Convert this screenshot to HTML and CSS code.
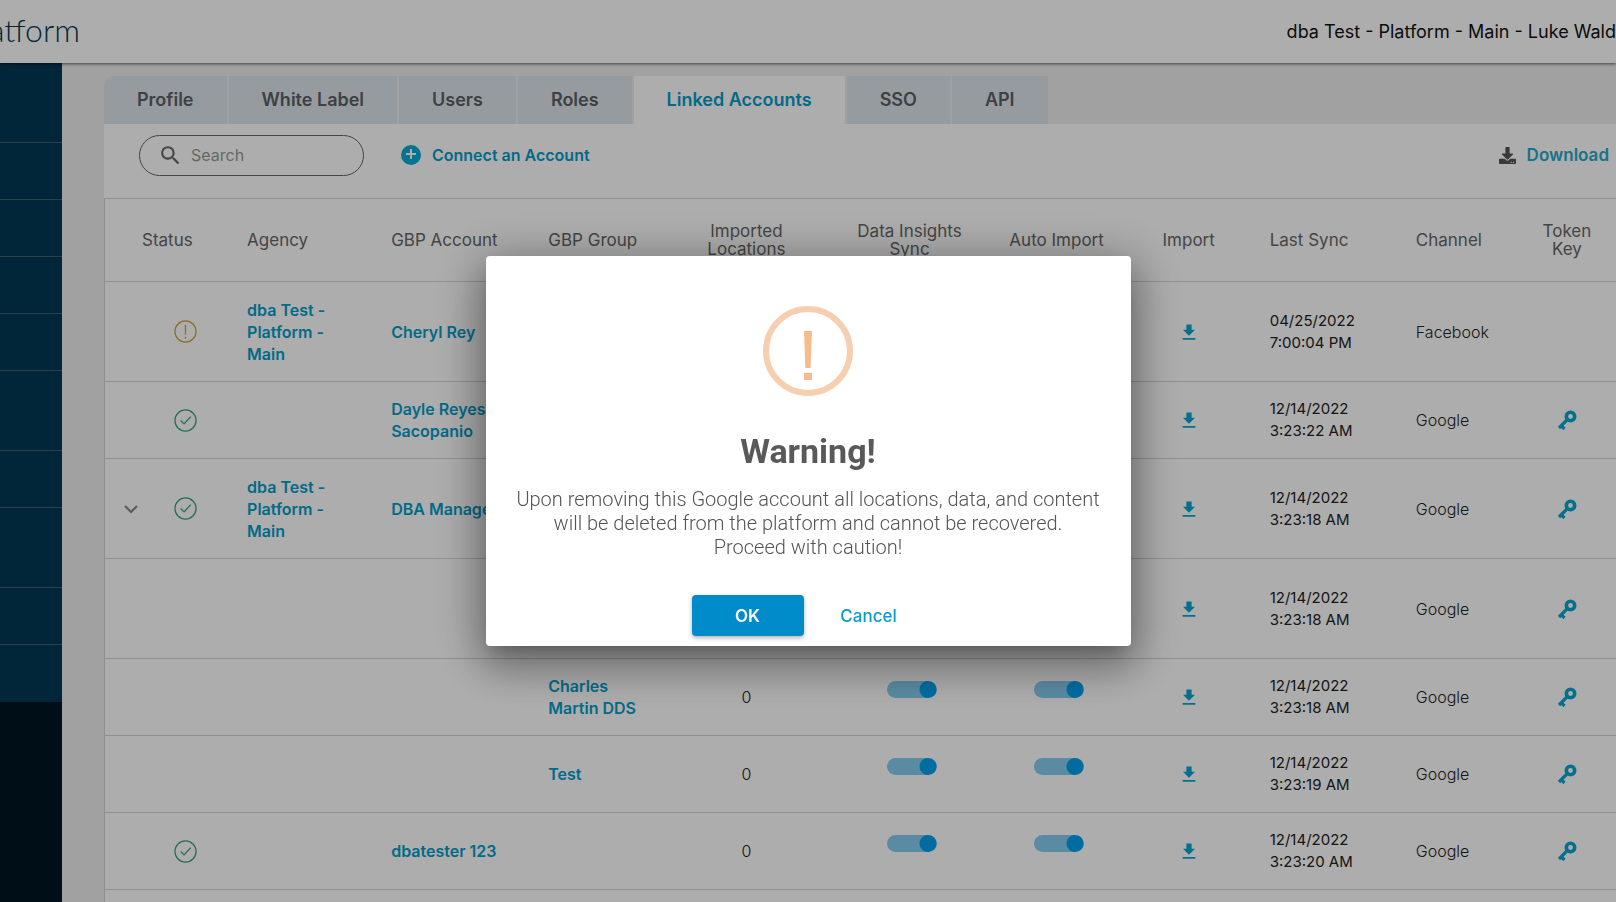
FILE: index.html
```html
<!DOCTYPE html>
<html lang="en">
<head>
    <meta charset="UTF-8">
    <meta name="viewport" content="width=device-width, initial-scale=1.0">
    <title>Platform - Linked Accounts</title>
    <link rel="stylesheet" href="styles.css">
</head>
<body>
    <!-- Shared icons -->
    <svg class="sprite" aria-hidden="true">
        <symbol id="icon-check" viewBox="0 0 24 24">
            <circle cx="12" cy="12" r="11" fill="none" stroke="currentColor" stroke-width="1.3"/>
            <path d="M7 12l3.500 3.500 7-7.500" fill="none" stroke="currentColor" stroke-width="1.4"/>
        </symbol>
        <symbol id="icon-alert" viewBox="0 0 24 24">
            <circle cx="12" cy="12" r="11" fill="none" stroke="currentColor" stroke-width="1.3"/>
            <path d="M12 5v10.500M12 17.500v2" fill="none" stroke="currentColor" stroke-width="1.4"/>
        </symbol>
        <symbol id="icon-import" viewBox="0 0 24 24">
            <path d="M8.500 2h7v7H20l-8 8-8-8h4.500zM3.500 20h17v2.300h-17z" fill="currentColor"/>
        </symbol>
        <symbol id="icon-key" viewBox="0 0 20 20">
            <circle cx="13.500" cy="6.500" r="4.200" fill="none" stroke="currentColor" stroke-width="3.600"/>
            <path d="M10.800 9.200L2 18M4 15.500l3.500 3.500" fill="none" stroke="currentColor" stroke-width="3.200"/>
        </symbol>
    </svg>

    <header class="topbar">
        <div class="logo">Platform</div>
        <div class="user">dba Test - Platform - Main - Luke Wald</div>
    </header>

    <div class="layout">
        <nav class="sidebar" aria-label="Main menu">
            <div class="side-item tall"></div>
            <div class="side-item"></div>
            <div class="side-item"></div>
            <div class="side-item"></div>
            <div class="side-item"></div>
            <div class="side-item tall"></div>
            <div class="side-item"></div>
            <div class="side-item tall"></div>
            <div class="side-item"></div>
            <div class="side-item"></div>
        </nav>

        <main class="content">
            <nav class="tabs">
                <a href="#" class="tab">Profile</a>
                <a href="#" class="tab">White Label</a>
                <a href="#" class="tab">Users</a>
                <a href="#" class="tab">Roles</a>
                <a href="#" class="tab active">Linked Accounts</a>
                <a href="#" class="tab">SSO</a>
                <a href="#" class="tab">API</a>
            </nav>

            <div class="panel">
                <div class="toolbar">
                    <label class="search">
                        <svg viewBox="0 0 24 24" width="25" height="25"><path d="M15.500 14h-.79l-.28-.27A6.471 6.471 0 0 0 16 9.500 6.500 6.500 0 1 0 9.500 16c1.610 0 3.090-.59 4.230-1.570l.27.28v.79l5 4.990L20.490 19l-4.990-5zm-6 0C7.010 14 5 11.990 5 9.500S7.010 5 9.500 5 14 7.010 14 9.500 11.990 14 9.500 14z" fill="currentColor"/></svg>
                        <input type="text" placeholder="Search" aria-label="Search">
                    </label>
                    <a href="#" class="connect">
                        <svg viewBox="0 0 20 20" width="20" height="20"><circle cx="10" cy="10" r="10" fill="currentColor"/><path d="M10 4v10M5 9h10" stroke="#fff" stroke-width="2"/></svg>
                        Connect an Account
                    </a>
                    <a href="#" class="download">
                        <svg viewBox="0 0 512 512" width="17" height="17"><path d="M216 0h80c13.300 0 24 10.700 24 24v168h87.700c17.800 0 26.700 21.500 14.100 34.100L269.700 378.300c-7.500 7.500-19.800 7.500-27.300 0L90.100 226.100c-12.600-12.600-3.700-34.100 14.100-34.100H192V24c0-13.300 10.700-24 24-24zm296 376v112c0 13.300-10.700 24-24 24H24c-13.300 0-24-10.700-24-24V376c0-13.300 10.700-24 24-24h146.700l49 49c20.100 20.100 52.500 20.100 72.600 0l49-49H488c13.300 0 24 10.700 24 24zm-124 88c0-11-9-20-20-20s-20 9-20 20 9 20 20 20 20-9 20-20zm64 0c0-11-9-20-20-20s-20 9-20 20 9 20 20 20 20-9 20-20z" fill="currentColor"/></svg>
                        Download
                    </a>
                </div>

                <div class="table-wrap">
                    <table class="accounts">
                        <colgroup>
                            <col class="col-status">
                            <col class="col-agency">
                            <col class="col-account">
                            <col class="col-group">
                            <col class="col-imported">
                            <col class="col-insights">
                            <col class="col-auto">
                            <col class="col-import">
                            <col class="col-sync">
                            <col class="col-channel">
                            <col class="col-token">
                        </colgroup>
                        <thead>
                            <tr>
                                <th class="status-head">Status</th>
                                <th>Agency</th>
                                <th>GBP Account</th>
                                <th>GBP Group</th>
                                <th class="mid">Imported<br>Locations</th>
                                <th class="mid">Data Insights<br>Sync</th>
                                <th class="mid">Auto Import</th>
                                <th class="mid">Import</th>
                                <th>Last Sync</th>
                                <th>Channel</th>
                                <th class="mid">Token<br>Key</th>
                            </tr>
                        </thead>
                        <tbody id="rows"></tbody>
                    </table>
                </div>
            </div>
        </main>
    </div>

    <div class="overlay">
        <div class="modal" role="dialog" aria-labelledby="modal-title">
            <div class="warning-icon">
                <svg viewBox="0 0 12 50" width="12" height="50"><path d="M2 0h8L8.600 37H3.400zM2 42h8v7H2z" fill="currentColor"/></svg>
            </div>
            <h2 id="modal-title">Warning!</h2>
            <p>Upon removing this Google account all locations, data, and content will be deleted from the platform and cannot be recovered.<br>Proceed with caution!</p>
            <div class="modal-actions">
                <button class="button ok">OK</button>
                <button class="button cancel">Cancel</button>
            </div>
        </div>
    </div>

    <script src="script.js"></script>
</body>
</html>
```
FILE: styles.css
```css
* {
    box-sizing: border-box;
}
body {
    margin: 0;
    height: 100vh;
    display: flex;
    flex-direction: column;
    overflow: hidden;
    font-family: Inter, sans-serif;
    font-size: 16px;
    line-height: 22px;
    color: #222;
    background: #ededed;
}
a {
    color: #049cc9;
    text-decoration: none;
}
.sprite {
    position: absolute;
    width: 0;
    height: 0;
}

/* Top bar */
.topbar {
    display: flex;
    justify-content: space-between;
    align-items: center;
    flex: none;
    height: 63px;
    background: #fff;
    box-shadow: 0 1px 3px rgba(0,0,0,0.6);
    z-index: 1;
    white-space: nowrap;
}
.logo {
    display: flex;
    justify-content: flex-end;
    width: 80px;
    padding-bottom: 3px;
    font-family: Lato, sans-serif;
    font-weight: 300;
    font-size: 32px;
    color: #033954;
}
.user {
    font-size: 18px;
    color: #111;
}

/* Layout */
.layout {
    display: flex;
    flex: 1;
    min-height: 0;
}
.sidebar {
    flex: none;
    width: 62px;
    background: #001622;
}
.side-item {
    height: 57px;
    background: #033954;
    border-bottom: 1px solid #45616f;
}
.side-item.tall {
    height: 80px;
}
.side-item:last-child {
    border-bottom: none;
}
.content {
    display: flex;
    flex-direction: column;
    flex: 1;
    min-width: 0;
    padding: 13px 0 0 42px;
}

/* Tabs */
.tabs {
    display: flex;
    gap: 2px;
}
.tab {
    padding: 13px 33px;
    font-size: 18px;
    font-weight: 600;
    background: #dee5ea;
    color: #5b6065;
}
.tab:first-child {
    border-top-left-radius: 10px;
}
.tab.active {
    background: #fff;
    color: #049cc9;
}

/* Toolbar */
.panel {
    display: flex;
    flex-direction: column;
    flex: 1;
    background: #fff;
}
.toolbar {
    display: flex;
    align-items: center;
    flex: none;
    height: 74px;
    padding: 0 7px 12px 35px;
}
.search {
    display: flex;
    align-items: center;
    gap: 8px;
    width: 225px;
    height: 41px;
    padding: 0 18px;
    border: 1px solid #666;
    border-radius: 21px;
    color: #666;
}
.search input {
    width: 100%;
    min-width: 0;
    padding: 0;
    border: none;
    outline: none;
    background: none;
    font: inherit;
}
.search input::placeholder {
    color: #999;
}
.search svg {
    flex: none;
}
.connect, .download {
    display: flex;
    align-items: center;
    gap: 11px;
    font-weight: 600;
}
.connect {
    margin-left: 37px;
}
.connect svg {
    color: #07abd6;
}
.download {
    margin-left: auto;
    font-size: 17px;
    color: #29a9c8;
}
.download svg {
    color: #555;
}

/* Accounts table */
.table-wrap {
    flex: 1;
    border-left: 1px solid #d5d5d5;
    border-top: 1px solid #d5d5d5;
}
.accounts {
    width: 100%;
    table-layout: fixed;
    border-collapse: separate;
    border-spacing: 0;
}
.col-status { width: 126px; }
.col-agency { width: 144px; }
.col-account { width: 157px; }
.col-group { width: 131px; }
.col-imported { width: 166px; }
.col-insights { width: 160px; }
.col-auto { width: 134px; }
.col-import { width: 130px; }
.col-sync { width: 146px; }
.col-channel { width: 118px; }
.col-token { width: 98px; }
.accounts th, .accounts td {
    padding: 0 0 0 16px;
    text-align: left;
    border-bottom: 1px solid #d5d5d5;
}
.accounts th {
    height: 83px;
    font-size: 17px;
    font-weight: 400;
    line-height: 18px;
    color: #666;
}
.accounts td {
    height: 77px;
    font-weight: 300;
}
.accounts .tall td {
    height: 100px;
}
.accounts .mid {
    padding: 0;
    text-align: center;
}
.accounts .toggle-cell {
    padding-left: 4px;
}
.accounts .status-head {
    padding-left: 37px;
}
.accounts td:first-child {
    padding-left: 19px;
}
.accounts .date {
    font-size: 15px;
    font-weight: 400;
}
.accounts td a {
    font-weight: 600;
}
.accounts svg {
    display: block;
}
.accounts .mid svg {
    margin: 0 auto;
}
.status {
    display: flex;
    align-items: center;
    gap: 36px;
}
.status .chevron {
    width: 14px;
    height: 14px;
    color: #888;
}
.status .state {
    width: 23px;
    height: 23px;
}
.state.good {
    color: #3aa57d;
}
.state.alert {
    color: #cba73a;
}
.icon-link {
    display: block;
}
.accounts .icon-link {
    color: #07a6cf;
}

/* Toggle switch */
.switch {
    appearance: none;
    display: block;
    width: 50px;
    height: 17px;
    margin: 0 auto 16px;
    border-radius: 9px;
    background: radial-gradient(circle at 41px 50%, #03a0ee 8px, #85cdf0 9px);
}

/* Warning dialog */
.overlay {
    position: fixed;
    inset: 0;
    z-index: 2;
    display: flex;
    align-items: center;
    justify-content: center;
    background: rgba(0,0,0,0.32);
}
.modal {
    width: 645px;
    padding: 50px 24px 10px;
    background: #fff;
    border-radius: 4px;
    box-shadow: 0 11px 15px -7px rgba(0,0,0,0.2), 0 24px 38px 3px rgba(0,0,0,0.14), 0 9px 46px 8px rgba(0,0,0,0.32);
    font-family: Roboto, sans-serif;
    text-align: center;
}
.warning-icon {
    display: flex;
    align-items: center;
    justify-content: center;
    width: 90px;
    height: 90px;
    margin: 0 auto;
    padding-top: 10px;
    border: 6px solid #f6cfb0;
    border-radius: 50%;
    color: #f6bc8e;
}
.modal h2 {
    margin: 35px 0 16px;
    font-size: 34px;
    line-height: 40px;
    color: #595959;
}
.modal p {
    margin: 0;
    font-size: 20px;
    font-weight: 300;
    line-height: 24px;
    color: #545454;
}
.modal-actions {
    display: flex;
    justify-content: center;
    gap: 9px;
    margin-top: 36px;
}
.button {
    width: 112px;
    height: 41px;
    border: none;
    border-radius: 4px;
    background: none;
    font-family: Inter, sans-serif;
    font-size: 17px;
    cursor: pointer;
}
.button.ok {
    background: #008bcb;
    color: #fff;
    font-weight: 600;
    box-shadow: 0 2px 4px rgba(0,0,0,0.3);
}
.button.cancel {
    color: #0a9bd0;
    font-weight: 500;
}
```
FILE: script.js
```js
const accounts = [
    { status: 'alert', agency: 'dba Test -<br>Platform -<br>Main', account: 'Cheryl Rey', date: '04/25/2022', time: '7:00:04 PM', channel: 'Facebook', tall: true },
    { status: 'good', account: 'Dayle Reyes<br>Sacopanio', date: '12/14/2022', time: '3:23:22 AM', channel: 'Google', key: true },
    { status: 'good', open: true, agency: 'dba Test -<br>Platform -<br>Main', account: 'DBA Manager', date: '12/14/2022', time: '3:23:18 AM', channel: 'Google', key: true, tall: true },
    { date: '12/14/2022', time: '3:23:18 AM', channel: 'Google', key: true, tall: true },
    { group: 'Charles<br>Martin DDS', count: 0, date: '12/14/2022', time: '3:23:18 AM', channel: 'Google', key: true },
    { group: 'Test', count: 0, date: '12/14/2022', time: '3:23:19 AM', channel: 'Google', key: true },
    { status: 'good', account: 'dbatester 123', count: 0, date: '12/14/2022', time: '3:23:20 AM', channel: 'Google', key: true }
];

const link = text => text ? `<a href="#">${text}</a>` : '';
const toggle = (show, label) => show ? `<input type="checkbox" class="switch" aria-label="${label}" checked>` : '';
const icon = (name, size, label) => `<a href="#" class="icon-link" aria-label="${label}"><svg width="${size}" height="${size}"><use href="#${name}"/></svg></a>`;

function statusCell(row) {
    if (!row.status) return '';
    const chevron = `<svg class="chevron" viewBox="0 0 14 14">${row.open ? '<path d="M1 4l6 6 6-6" fill="none" stroke="currentColor" stroke-width="2.2"/>' : ''}</svg>`;
    const name = row.status === 'good' ? 'icon-check' : 'icon-alert';
    return `<div class="status">${chevron}<svg class="state ${row.status}"><use href="#${name}"/></svg></div>`;
}

document.querySelector('#rows').innerHTML = accounts.map(row => {
    const counted = row.count !== undefined;
    return `<tr class="${row.tall ? 'tall' : ''}">
        <td>${statusCell(row)}</td>
        <td>${link(row.agency)}</td>
        <td>${link(row.account)}</td>
        <td>${link(row.group)}</td>
        <td class="mid">${counted ? row.count : ''}</td>
        <td class="mid toggle-cell">${toggle(counted, 'Data insights sync')}</td>
        <td class="mid toggle-cell">${toggle(counted, 'Auto import')}</td>
        <td class="mid">${icon('icon-import', 18, 'Import')}</td>
        <td class="date">${row.date}<br>${row.time}</td>
        <td>${row.channel}</td>
        <td class="mid">${row.key ? icon('icon-key', 20, 'Token key') : ''}</td>
    </tr>`;
}).join('');
```
